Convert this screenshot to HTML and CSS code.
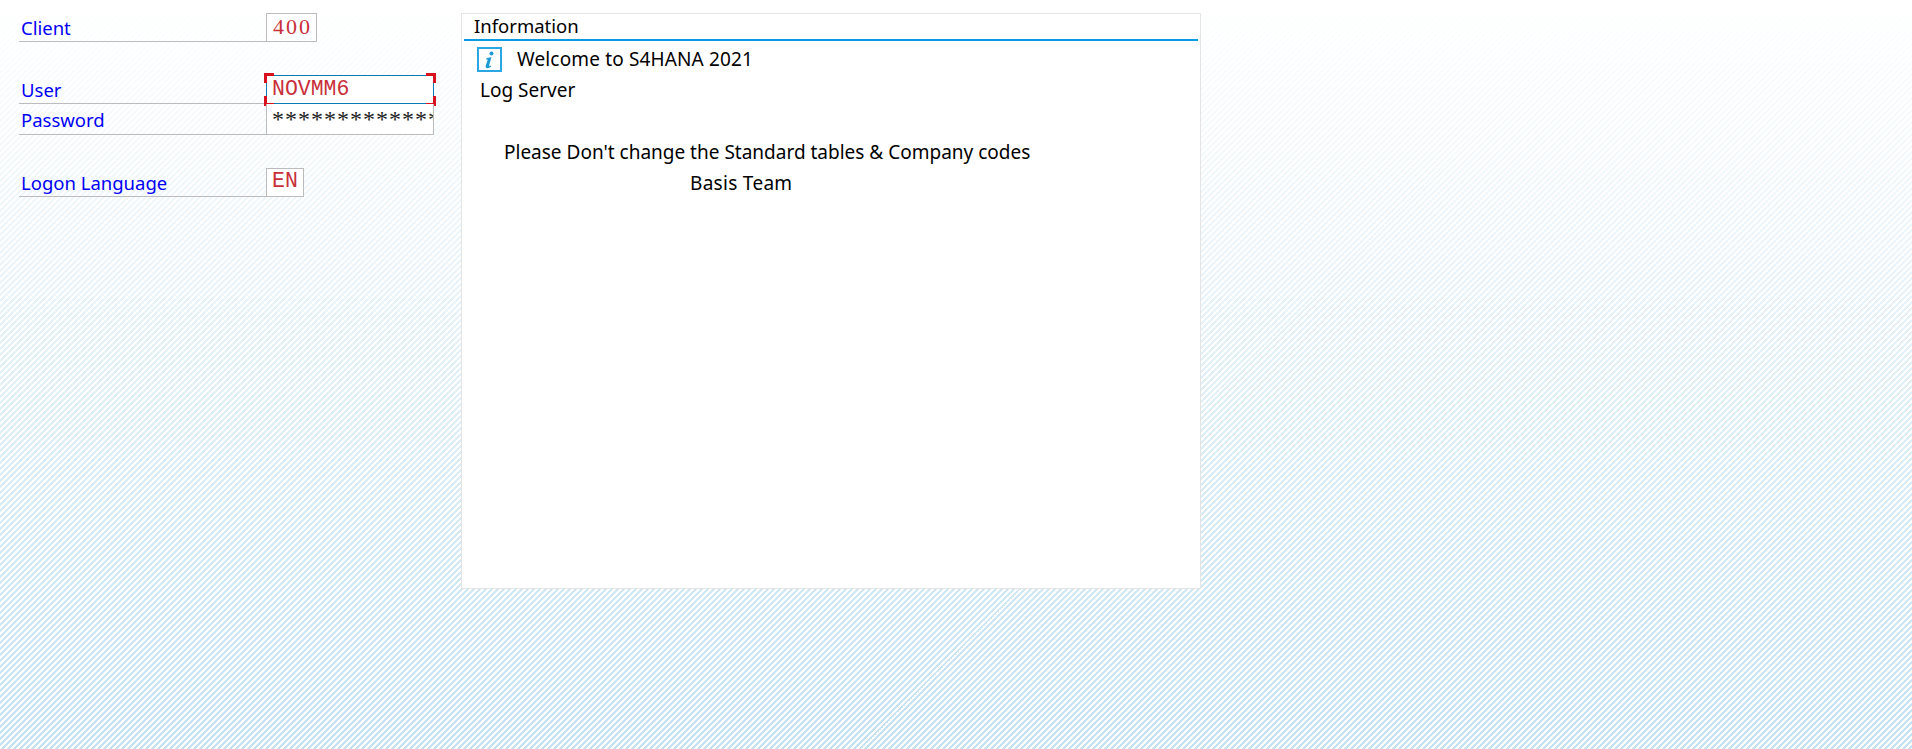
FILE: index.html
```html
<!DOCTYPE html>
<html lang="en">
    <head>
        <meta charset="UTF-8">
        <meta name="viewport" content="width=device-width, initial-scale=1.0">
        <title>Logon</title>
        <link rel="stylesheet" href="styles.css">
    </head>
    <body>

        <!-- logon fields -->
        <form class="logon">
            <div class="row row-client">
                <label class="label">Client</label>
                <div class="field field-client">400</div>
            </div>
            <div class="row row-user">
                <label class="label">User</label>
                <div class="field field-wide field-focus">
                    NOVMM6
                    <span class="corner corner-tl"></span>
                    <span class="corner corner-tr"></span>
                    <span class="corner corner-bl"></span>
                    <span class="corner corner-br"></span>
                </div>
            </div>
            <div class="row row-password">
                <label class="label">Password</label>
                <div class="field field-wide field-stars">**************</div>
            </div>
            <div class="row row-language">
                <label class="label">Logon Language</label>
                <div class="field field-language">EN</div>
            </div>
        </form>

        <!-- information panel -->
        <section class="info">
            <h2 class="info-title">Information</h2>
            <div class="info-body">
                <div class="line line-first">
                    <svg class="info-icon" width="25" height="25" viewBox="0 0 25 25">
                        <rect x="1" y="1" width="23" height="23" fill="#fff" stroke="#2ba6e3" stroke-width="2"/>
                        <circle cx="14.5" cy="6.5" r="2" fill="#1a9ad9"/>
                        <path d="M9.5 11 L14.5 10.2 L12 18.5 Q11.8 19.6 13.4 18.6 L14.2 19.4 Q11.6 21.6 9.4 21 Q8.2 20.5 8.8 18.6 L10.8 12.6 L9.3 12.4 Z" fill="#1a9ad9"/>
                    </svg>
                    <span>Welcome to S4HANA 2021</span>
                </div>
                <div class="line line-log">Log Server</div>
                <div class="line line-blank"></div>
                <div class="line line-notice">Please Don't change the Standard tables &amp; Company codes</div>
                <div class="line line-team">Basis Team</div>
            </div>
        </section>

    </body>
</html>
```

FILE: styles.css
```css
html,
body {
    height: 100%;
}

body {
    margin: 0;
    padding: 13px 0 0 19px;
    box-sizing: border-box;
    display: flex;
    align-items: flex-start;
    gap: 28px;
    overflow: hidden;
    font-family: 'Noto Sans', 'Open Sans', sans-serif;
    font-size: 19px;
    background:
        linear-gradient(to bottom, rgba(255, 255, 255, 1) 0%, rgba(255, 255, 255, 0) 100%),
        repeating-linear-gradient(135deg, #c4e1f2 0, #c4e1f2 2.12px, #fff 2.12px, #fff 4.24px);
}

.logon {
    width: 414px;
    flex-shrink: 0;
}

.row {
    display: flex;
    height: 29px;
    box-sizing: border-box;
    border-bottom: 1px solid #bcbcbc;
    width: 247px;
}

.row-user {
    margin-top: 33px;
}

.row-password {
    height: 31px;
}

.row-language {
    margin-top: 33px;
}

.label {
    flex: 0 0 245px;
    padding-left: 2px;
    color: #0000f5;
    font-size: 18.5px;
    line-height: 29px;
}

.row-password .label {
    line-height: 32px;
}

.field {
    position: relative;
    flex-shrink: 0;
    height: 29px;
    box-sizing: border-box;
    padding-left: 6px;
    border: 1px solid #bcbcbc;
    background: #fff;
    color: #c8303a;
    font-family: 'Liberation Mono', monospace;
    font-size: 21.5px;
    line-height: 25px;
    white-space: nowrap;
}

.field-client {
    width: 51px;
    font-family: 'Liberation Serif', serif;
    font-size: 22px;
    letter-spacing: 2px;
}

.field-wide {
    width: 168px;
}

.field-language {
    width: 38px;
    padding-left: 5px;
}

.field-focus {
    border-color: #0a7ab5;
    padding-left: 5px;
    line-height: 26px;
}

.field-stars {
    height: 31px;
    overflow: hidden;
    border-top: 0;
    padding-left: 5px;
    color: #222;
    font-family: 'Liberation Serif', serif;
    font-size: 24px;
    letter-spacing: 1px;
    line-height: 30px;
}

.corner {
    position: absolute;
    width: 7px;
    height: 7px;
    border: 0 solid #d9101e;
}

.corner-tl {
    top: -3px;
    left: -3px;
    border-width: 3px 0 0 3px;
}

.corner-tr {
    top: -3px;
    right: -3px;
    border-width: 3px 3px 0 0;
}

.corner-bl {
    bottom: -3px;
    left: -3px;
    border-width: 0 0 3px 3px;
}

.corner-br {
    bottom: -3px;
    right: -3px;
    border-width: 0 3px 3px 0;
}

.info {
    width: 740px;
    height: 576px;
    flex-shrink: 0;
    box-sizing: border-box;
    padding: 0 2px;
    border: 1px solid #e4e4e4;
    background: #fff;
}

.info-title {
    margin: 0;
    height: 27px;
    padding-left: 10px;
    box-sizing: border-box;
    border-bottom: 2px solid #0a9be0;
    font-size: 18.5px;
    font-weight: normal;
    line-height: 24px;
    color: #000;
}

.info-body {
    padding-top: 3px;
    color: #000;
}

.line {
    height: 31px;
    line-height: 31px;
}

.line-first {
    display: flex;
    align-items: center;
    gap: 15px;
    padding-left: 13px;
    letter-spacing: 0.15px;
}

.info-icon {
    flex-shrink: 0;
}

.line-log {
    padding-left: 16px;
}

.line-notice {
    padding-left: 40px;
}

.line-team {
    padding-left: 226px;
    letter-spacing: 0.3px;
}
```
